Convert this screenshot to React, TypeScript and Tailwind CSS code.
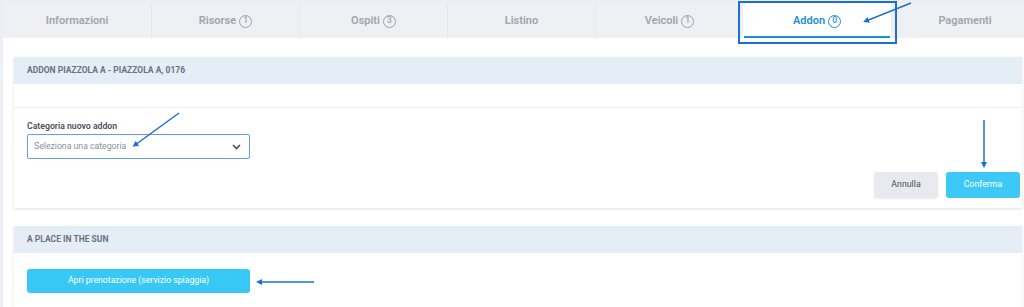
import React from "react";

const Badge = ({ n, active }: { n: string; active?: boolean }) => (
  <span
    className={
      "ml-[3px] inline-flex h-[13px] w-[13px] items-center justify-center rounded-full border pb-[1px] text-[8.5px] font-medium leading-none " +
      (active ? "border-[#1b8fd6] text-[#1b8fd6]" : "border-[#9ea3ab] text-[#9ea3ab]")
    }
  >
    {n}
  </span>
);

const tabs: { label: string; n?: string; active?: boolean }[] = [
  { label: "Informazioni" },
  { label: "Risorse", n: "1" },
  { label: "Ospiti", n: "3" },
  { label: "Listino" },
  { label: "Veicoli", n: "1" },
  { label: "Addon", n: "0", active: true },
  { label: "Pagamenti" },
];

export default function App() {
  return (
    <div className="relative h-[307px] w-[1024px] overflow-hidden bg-[#eceff3] pl-[3px] pt-[3px] font-['Roboto',sans-serif]">
      <div className="h-full w-[1040px] bg-white">
        {/* Tabs */}
        <div className="flex h-[35px] w-[1036px] bg-[#eef0f3]">
          {tabs.map((t, i) => (
            <div
              key={t.label}
              className={
                "relative flex w-[148px] shrink-0 items-center justify-center pt-[1px] text-[11px] font-semibold " +
                (t.active ? "bg-white text-[#1b8fd6]" : "text-[#a0a5ad]") +
                (i > 0 && !t.active && !tabs[i - 1].active ? " border-l border-[#e4e7ec]" : "")
              }
            >
              <span>{t.label}</span>
              {t.n && <Badge n={t.n} active={t.active} />}
              {t.active && (
                <div className="absolute bottom-[0px] left-[1px] right-[1px] h-[2px] bg-[#1b8fd6]" />
              )}
            </div>
          ))}
        </div>

        {/* Content */}
        <div className="pl-[11px] pt-[19px]">
          {/* Card 1 */}
          <div className="w-[1008px] bg-white shadow-[0_1px_3px_rgba(0,0,0,0.12)]">
            <div className="flex h-[27px] items-center bg-[#e5edf6] pl-[13px] text-[8.5px] font-bold uppercase text-[#6b7280]">
              Addon Piazzola A - Piazzola A, 0176
            </div>
            <div className="h-[24px] border-b border-[#eef0f3]" />
            <div className="pl-[13px] pr-[2px] pt-[12px] pb-[10px]">
              <div className="h-[13px] text-[8.7px] font-semibold leading-[13px] text-[#4b5058]">Categoria nuovo addon</div>
              <div className="mt-[1px] flex h-[25px] w-[223px] items-center justify-between rounded-[2px] border border-[#62a2e0] pl-[6px] pr-[8px]">
                <span className="text-[8.7px] text-[#8a9099]">Seleziona una categoria</span>
                <svg width="9" height="6" viewBox="0 0 9 6" fill="none">
                  <path d="M1 1l3.5 3.5L8 1" stroke="#4b5058" strokeWidth="1.6" />
                </svg>
              </div>
              <div className="mt-[13px] flex justify-end gap-[8px]">
                <button className="h-[26px] w-[64px] rounded-[3px] bg-[#e8eaf0] text-[8.8px] text-[#4b5058] shadow-[0_1px_2px_rgba(0,0,0,0.08)]">
                  Annulla
                </button>
                <button className="h-[26px] w-[74px] rounded-[3px] bg-[#3cc9f7] text-[8.8px] text-white">
                  Conferma
                </button>
              </div>
            </div>
          </div>

          {/* Card 2 */}
          <div className="mt-[18px] w-[1008px] bg-white shadow-[0_1px_3px_rgba(0,0,0,0.12)]">
            <div className="flex h-[27px] items-center bg-[#e5edf6] pl-[13px] text-[8.5px] font-bold uppercase text-[#6b7280]">
              A place in the sun
            </div>
            <div className="pl-[13px] pt-[13px] pb-[16px]">
              <button className="h-[24px] w-[223px] rounded-[3px] bg-[#38c8f6] text-[8.7px] text-white">
                Apri prenotazione (servizio spiaggia)
              </button>
            </div>
          </div>
        </div>
      </div>

      {/* Annotations */}
      <div className="absolute left-[738px] top-[1px] h-[43px] w-[159px] border-2 border-[#1d6fd8]" />
      <svg className="pointer-events-none absolute left-0 top-0" width="1024" height="307">
        <defs>
          <marker id="ah" markerWidth="6" markerHeight="6" refX="3" refY="3" orient="auto" markerUnits="userSpaceOnUse">
            <path d="M0 0L6 3L0 6z" fill="#1d6fd8" />
          </marker>
        </defs>
        <g stroke="#1d6fd8" strokeWidth="1.5" fill="none">
          <line x1="911" y1="3" x2="866" y2="21" markerEnd="url(#ah)" />
          <line x1="179" y1="113" x2="135" y2="145" markerEnd="url(#ah)" />
          <line x1="984" y1="120" x2="984" y2="165" markerEnd="url(#ah)" />
          <line x1="314" y1="282" x2="259" y2="282" markerEnd="url(#ah)" />
        </g>
      </svg>
    </div>
  );
}
